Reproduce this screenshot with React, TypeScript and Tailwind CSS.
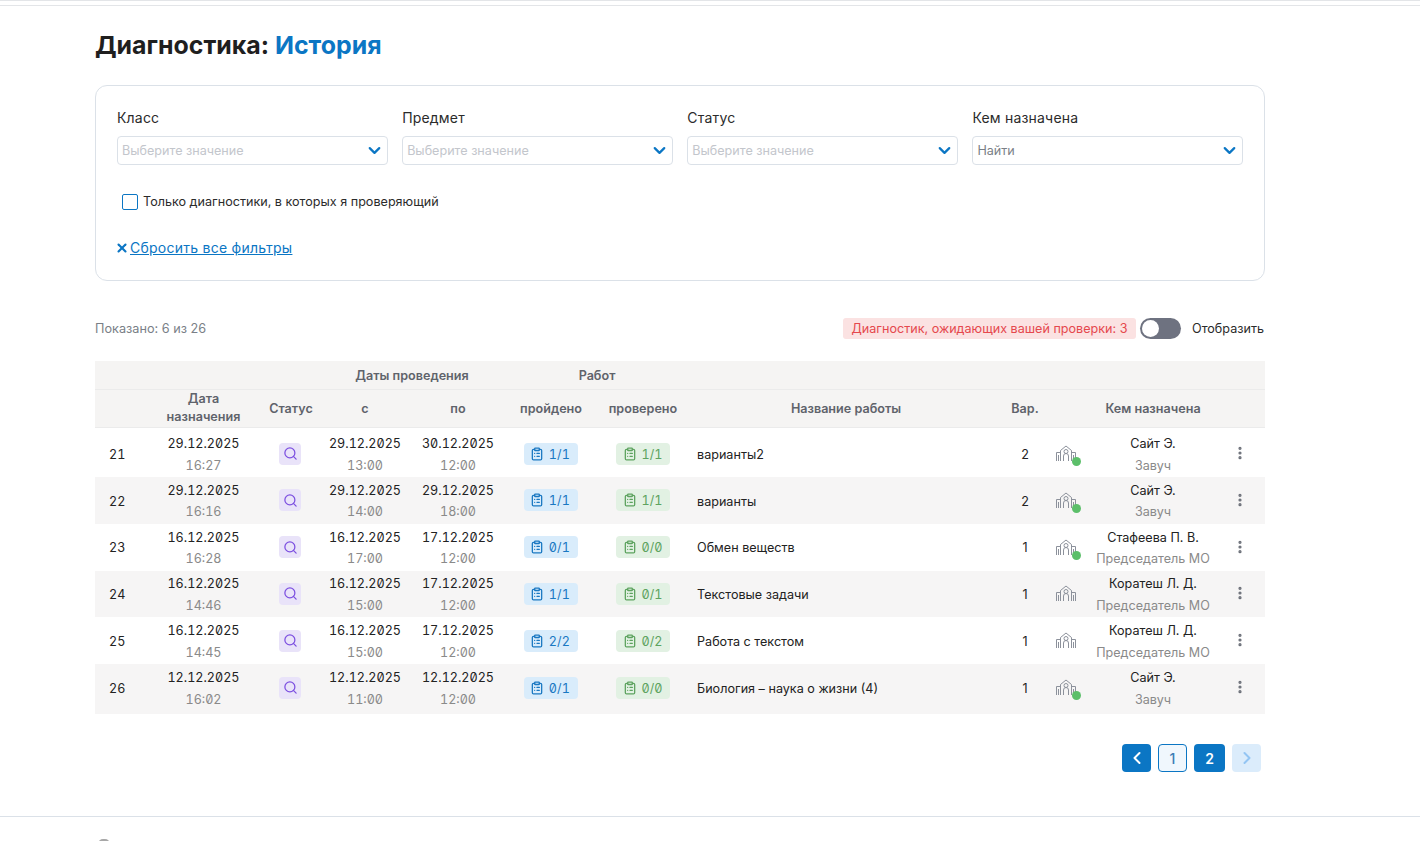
import { ChevronDown, ChevronLeft, ChevronRight, ClipboardList, EllipsisVertical, Search, X } from "lucide-react";

const rows = [
  { n: 21, d: "29.12.2025", t: "16:27", fd: "29.12.2025", ft: "13:00", td: "30.12.2025", tt: "12:00", a: "1/1", b: "1/1", name: "варианты2", v: 2, dot: true, who: "Сайт Э.", role: "Завуч" },
  { n: 22, d: "29.12.2025", t: "16:16", fd: "29.12.2025", ft: "14:00", td: "29.12.2025", tt: "18:00", a: "1/1", b: "1/1", name: "варианты", v: 2, dot: true, who: "Сайт Э.", role: "Завуч" },
  { n: 23, d: "16.12.2025", t: "16:28", fd: "16.12.2025", ft: "17:00", td: "17.12.2025", tt: "12:00", a: "0/1", b: "0/0", name: "Обмен веществ", v: 1, dot: true, who: "Стафеева П. В.", role: "Председатель МО" },
  { n: 24, d: "16.12.2025", t: "14:46", fd: "16.12.2025", ft: "15:00", td: "17.12.2025", tt: "12:00", a: "1/1", b: "0/1", name: "Текстовые задачи", v: 1, dot: false, who: "Коратеш Л. Д.", role: "Председатель МО" },
  { n: 25, d: "16.12.2025", t: "14:45", fd: "16.12.2025", ft: "15:00", td: "17.12.2025", tt: "12:00", a: "2/2", b: "0/2", name: "Работа с текстом", v: 1, dot: false, who: "Коратеш Л. Д.", role: "Председатель МО" },
  { n: 26, d: "12.12.2025", t: "16:02", fd: "12.12.2025", ft: "11:00", td: "12.12.2025", tt: "12:00", a: "0/1", b: "0/0", name: "Биология – наука о жизни (4)", v: 1, dot: true, who: "Сайт Э.", role: "Завуч" },
];

function Field({ label, placeholder, dark }: { label: string; placeholder: string; dark?: boolean }) {
  return (
    <div>
      <div className="mb-[10px] text-[14px] leading-[17px] tracking-[0.2px] text-[#2b2b2b]">{label}</div>
      <div className="flex h-[29px] items-center justify-between rounded-[4px] border border-[#dbe1e8] pl-[4px] pr-[3px]">
        <span className={dark ? "pt-[2px] text-[12.6px] text-[#7a7f87]" : "pt-[1px] text-[12.6px] text-[#c3c6cc]"}>{placeholder}</span>
        <ChevronDown size={19} strokeWidth={2.8} className="text-[#0b76c4]" />
      </div>
    </div>
  );
}

function DateCell({ d, t, first }: { d: string; t: string; first: boolean }) {
  return (
    <td className={(first ? "pt-[5px]" : "pt-[2px]") + " text-center text-[12.6px] tabular-nums slashed-zero"}>
      <div className="leading-[21.5px] text-[#222]">{d}</div>
      <div className="leading-[21.5px] text-[#8a8a8a]">{t}</div>
    </td>
  );
}

function School({ dot }: { dot: boolean }) {
  return (
    <div className="relative ml-[8px] h-[17px] w-[22px]">
      <svg width="22" height="17" viewBox="0 0 22 17" fill="none" stroke="#8c919b" strokeWidth="1">
        <path d="M5.5 5.5 L11 1 L16.5 5.5 V16 M5.5 5.5 V16" />
        <circle cx="11" cy="6.5" r="2" />
        <path d="M8.5 16 V11 a2.5 2.5 0 0 1 5 0 V16" />
        <path d="M5.5 7.5 H1.5 V16 M3.5 10 V16 M16.5 7.5 H20.5 V16 M18.5 10 V16" />
      </svg>
      {dot && <span className="absolute right-[-4px] top-[12px] h-[9px] w-[9px] rounded-full bg-[#5cbf6a]" />}
    </div>
  );
}

export default function App() {
  return (
    <div className="h-[841px] overflow-hidden bg-white font-['Inter',sans-serif] text-[#222]">
      <div className="h-[6px] border-y border-[#e3e5e8]" />
      <main className="mx-[155px] ml-[95px]">
        <h1 className="mt-[22px] text-[24.9px] font-bold leading-[35px] text-[#1f1f1f]">
          Диагностика: <span className="text-[#0b76c4]">История</span>
        </h1>
        <section className="mt-[22px] h-[196px] rounded-[12px] border border-[#dbe1e8] px-[21px] pt-[23px]">
          <div className="grid grid-cols-4 gap-x-[14.5px]">
            <Field label="Класс" placeholder="Выберите значение" />
            <Field label="Предмет" placeholder="Выберите значение" />
            <Field label="Статус" placeholder="Выберите значение" />
            <Field label="Кем назначена" placeholder="Найти" dark />
          </div>
          <label className="ml-[5px] mt-[28px] flex items-center gap-[5px] text-[12.6px] leading-[17px] text-[#2b2b2b]">
            <span className="h-[16px] w-[16px] rounded-[2px] border border-[#0b76c4]" />
            Только диагностики, в которых я проверяющий
          </label>
          <div className="mt-[29px] flex items-center text-[14px] leading-[18px] tracking-[0.25px] text-[#0b76c4]">
            <X size={14} strokeWidth={3.6} className="-ml-[2px] mr-[1px]" />
            <a className="underline">Сбросить все фильтры</a>
          </div>
        </section>

        <div className="mt-[37px] flex h-[21px] items-center pr-[1px] text-[12.6px]">
          <span className="text-[12.7px] text-[#7a7f87]">Показано: 6 из 26</span>
          <span className="ml-auto flex h-[21px] items-center rounded-[3px] bg-[#fbe2e2] px-[8.5px] pt-[1px] text-[#e5484d]">
            Диагностик, ожидающих вашей проверки: 3
          </span>
          <span className="ml-[4px] flex h-[21px] w-[41px] items-center rounded-full bg-[#6e7280] pl-[2px]">
            <span className="h-[17px] w-[17px] rounded-full bg-white" />
          </span>
          <span className="ml-[11px] pt-[1px] text-[#2b2b2b]">Отобразить</span>
        </div>

        <table className="mt-[22px] w-[1170px] table-fixed border-collapse text-[12.6px]">
          <colgroup>
            <col className="w-[49px]" />
            <col className="w-[119px]" />
            <col className="w-[56px]" />
            <col className="w-[92px]" />
            <col className="w-[94px]" />
            <col className="w-[92px]" />
            <col className="w-[92px]" />
            <col className="w-[314px]" />
            <col className="w-[44px]" />
            <col className="w-[44px]" />
            <col className="w-[124px]" />
            <col className="w-[50px]" />
          </colgroup>
          <thead className="bg-[#f5f4f3] text-[12.6px] font-semibold text-[#5f636b]">
            <tr className="h-[28px] border-b border-[#ebebeb]">
              <th colSpan={3} />
              <th colSpan={2} className="pt-[4px] font-semibold">Даты проведения</th>
              <th colSpan={2} className="pt-[4px] font-semibold">Работ</th>
              <th colSpan={5} />
            </tr>
            <tr className="h-[38px] border-b border-[#ebebeb] [&>th]:font-semibold">
              <th />
              <th className="leading-[18px]">Дата<br />назначения</th>
              <th className="pt-[2px]">Статус</th>
              <th className="pt-[2px]">с</th>
              <th className="pt-[2px]">по</th>
              <th className="pt-[2px]">пройдено</th>
              <th className="pt-[2px]">проверено</th>
              <th className="pt-[2px]">Название работы</th>
              <th className="pt-[2px]">Вар.</th>
              <th />
              <th className="pt-[2px]">Кем назначена</th>
              <th />
            </tr>
          </thead>
          <tbody>
            {rows.map((r, i) => {
              const first = i === 0;
              const last = i === 5;
              const textPad = first ? "pt-[5px]" : "pt-[2px]";
              const linePad = first ? "pt-[7px]" : "pt-[3.5px]";
              return (
                <tr
                  key={r.n}
                  className={[
                    i % 2 === 1 ? "bg-[#f6f5f5]" : "bg-white",
                    first ? "h-[50px] [&>td.b]:pt-[3px]" : last ? "h-[50px] [&>td]:pb-[3px]" : "h-[46.75px]",
                  ].join(" ")}
                >
                  <td className={linePad + " pl-[14px] tabular-nums text-[#222]"}>{r.n}</td>
                  <DateCell d={r.d} t={r.t} first={first} />
                  <td className="b">
                    <div className="ml-[16px] flex h-[22px] w-[22px] items-center justify-center rounded-[4px] bg-[#e9e3f9]">
                      <Search size={15} strokeWidth={2} className="text-[#7c4fe0]" />
                    </div>
                  </td>
                  <DateCell d={r.fd} t={r.ft} first={first} />
                  <DateCell d={r.td} t={r.tt} first={first} />
                  <td className="b">
                    <div className="mx-auto flex h-[22px] w-[54px] items-center justify-center gap-[5px] rounded-[4px] bg-[#d9ecfb] pr-[2px] text-[12.6px] tracking-[0.2px] tabular-nums slashed-zero text-[#1a78c2]">
                      <ClipboardList size={14} strokeWidth={2.2} />
                      <span className="pt-[3px]">{r.a}</span>
                    </div>
                  </td>
                  <td className="b">
                    <div className="mx-auto flex h-[22px] w-[54px] items-center justify-center gap-[5px] rounded-[4px] bg-[#e2f1e3] pr-[1px] text-[12.6px] tabular-nums slashed-zero text-[#5da35f]">
                      <ClipboardList size={14} strokeWidth={2.2} />
                      <span className="pt-[3px]">{r.b}</span>
                    </div>
                  </td>
                  <td className={linePad + " pl-[8px] text-[#222]"}>{r.name}</td>
                  <td className={linePad + " text-center text-[#222]"}>{r.v}</td>
                  <td className="b"><School dot={r.dot} /></td>
                  <td className={textPad + " text-center"}>
                    <div className="leading-[21.5px] text-[#222]">{r.who}</div>
                    <div className="leading-[21.5px] text-[#8a8a8a]">{r.role}</div>
                  </td>
                  <td className="b">
                    <EllipsisVertical size={16} strokeWidth={2.8} className="mx-auto -mt-[1px] text-[#6b6f78]" />
                  </td>
                </tr>
              );
            })}
          </tbody>
        </table>

        <nav className="mt-[30px] flex justify-end gap-[7px] pr-[4px] text-[14px] font-semibold">
          <span className="flex h-[28px] w-[29px] items-center justify-center rounded-[4px] bg-[#0b76c4] text-white">
            <ChevronLeft size={20} strokeWidth={2.4} />
          </span>
          <span className="flex h-[28px] w-[29px] items-center justify-center rounded-[4px] border border-[#0b76c4] bg-[#f0f7fd] font-medium text-[#3d7db5]">1</span>
          <span className="flex h-[28px] w-[31px] items-center justify-center rounded-[4px] bg-[#0b76c4] text-white">2</span>
          <span className="flex h-[28px] w-[29px] items-center justify-center rounded-[4px] bg-[#dbecfb] text-[#93c5f3]">
            <ChevronRight size={20} strokeWidth={2.4} />
          </span>
        </nav>
      </main>
      <footer className="mt-[44px] h-[40px] border-t border-[#dbe1e8] pl-[98px] pt-[22px]">
        <span className="block h-[10px] w-[12px] rounded-full bg-[#a8a8a8]" />
      </footer>
    </div>
  );
}
